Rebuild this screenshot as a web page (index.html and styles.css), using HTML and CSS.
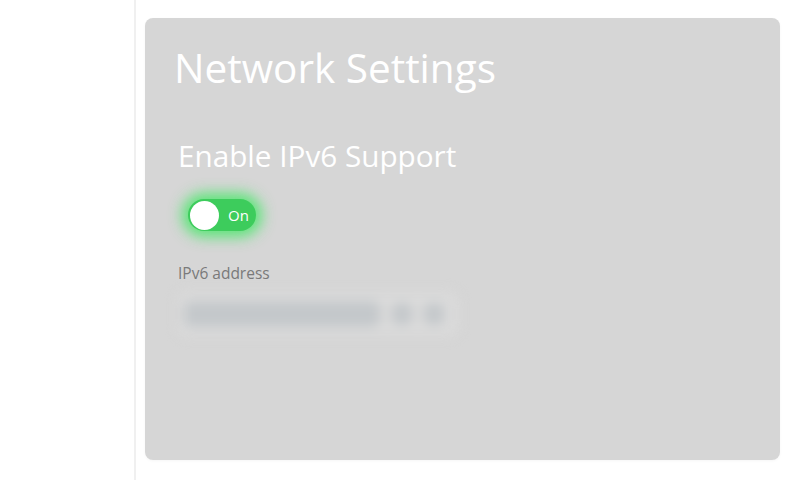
FILE: index.html
```html
<!DOCTYPE html>
<html>
<head>
<meta charset="utf-8">
<link rel="stylesheet" href="styles.css">
</head>
<body>
<div class="app">
  <aside class="sidebar"></aside>
  <main class="main">
    <section class="card">
      <h1 class="title">Network Settings</h1>
      <div class="setting">
        <h2 class="setting-label">Enable IPv6 Support</h2>
        <div class="toggle">
          <span class="knob"></span>
          <span class="toggle-text">On</span>
        </div>
        <div class="field-label">IPv6 address</div>
        <div class="field">
          <span class="blur-a"></span>
          <span class="blur-b"></span>
          <span class="blur-c"></span>
        </div>
      </div>
    </section>
  </main>
</div>
</body>
</html>
```
FILE: styles.css
```css
html, body {
  margin: 0;
  padding: 0;
  background: #ffffff;
  font-family: "Open Sans", "Noto Sans", sans-serif;
}
.app {
  display: flex;
  width: 800px;
  height: 480px;
}
.sidebar {
  width: 134px;
  border-right: 2px solid #f0f0f0;
  flex: none;
}
.main {
  flex: 1;
  padding: 18px 20px 20px 9px;
  display: flex;
}
.card {
  flex: 1;
  background: #d6d6d6;
  border-radius: 8px;
  padding: 0 29px;
  box-shadow: 0 1px 3px rgba(0,0,0,0.04);
}
.title {
  margin: 23px 0 0 0;
  font-size: 40.5px;
  font-weight: 400;
  line-height: 54px;
  color: #ffffff;
}
.setting {
  padding-left: 4px;
}
.setting-label {
  margin: 40px 0 0 0;
  font-size: 29.7px;
  font-weight: 400;
  line-height: 42px;
  color: #ffffff;
}
.toggle {
  margin: 22px 0 0 10px;
  width: 68px;
  height: 32px;
  border-radius: 16px;
  background: #3dcc5c;
  box-shadow: 0 0 14px 6px rgba(40, 235, 80, 0.7);
  display: flex;
  align-items: center;
  padding: 0 2px;
  box-sizing: border-box;
}
.knob {
  width: 29px;
  height: 29px;
  border-radius: 50%;
  background: #ffffff;
  flex: none;
}
.toggle-text {
  margin-left: 9px;
  font-size: 15px;
  color: #ffffff;
  font-weight: 500;
}
.field-label {
  margin-top: 31px;
  font-size: 15.5px;
  color: #7a7a7a;
  line-height: 22px;
}
.field {
  margin-top: 8px;
  width: 280px;
  height: 44px;
  display: flex;
  align-items: center;
  gap: 12px;
  padding: 0 6px;
  box-sizing: border-box;
  background: #dadada;
  border-radius: 8px;
  filter: blur(6px);
}
.blur-a {
  width: 196px;
  height: 26px;
  background: #c4c8cb;
  border-radius: 8px;
}
.blur-b {
  width: 20px;
  height: 22px;
  background: #c4c8cb;
  border-radius: 8px;
}
.blur-c {
  width: 20px;
  height: 22px;
  background: #c4c8cb;
  border-radius: 8px;
}
```
